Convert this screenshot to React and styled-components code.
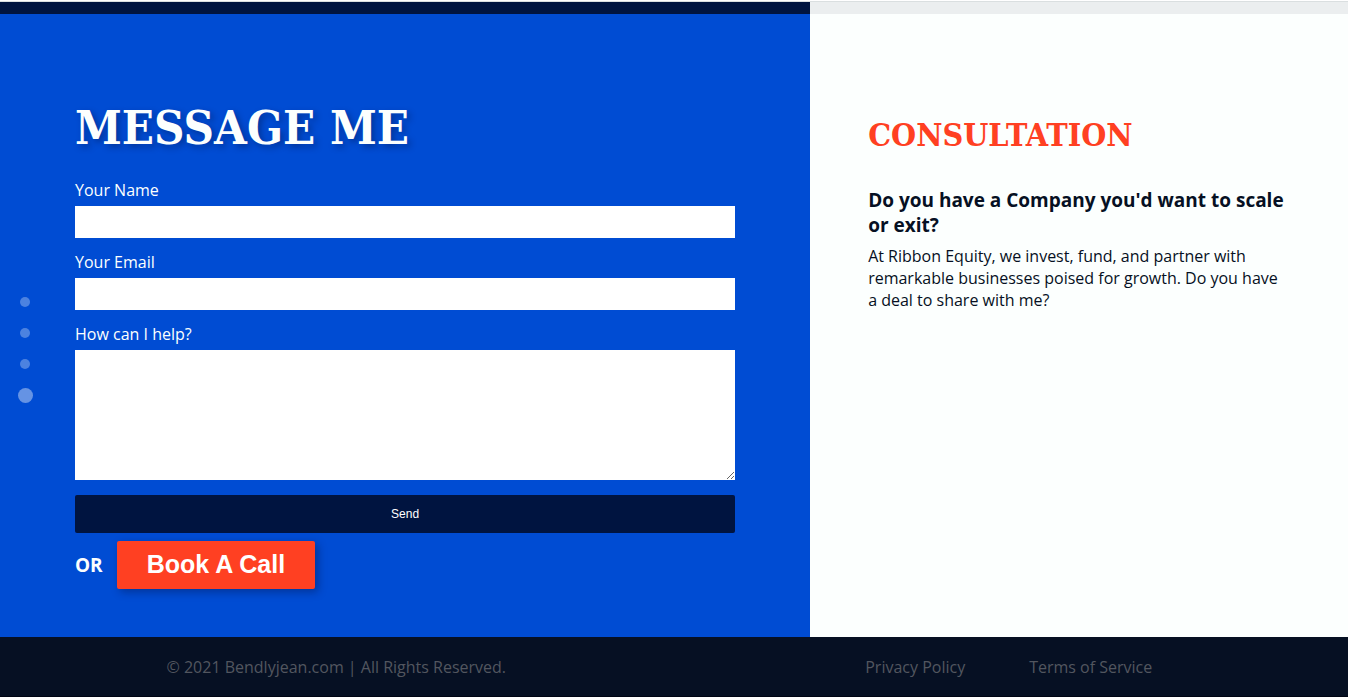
import React from "react";
import styled, { createGlobalStyle } from "styled-components";

const GlobalStyle = createGlobalStyle`
  *, *::before, *::after { box-sizing: border-box; }
  body {
    margin: 0;
    background: #fcfffe;
    color: #041142;
    font-family: "Open Sans", "Noto Sans", sans-serif;
    font-size: 16px;
    line-height: 22px;
  }
  h1, h2, h3, p, ul { margin: 0; padding: 0; }
`;

const Page = styled.div`
  display: flex;
  flex-direction: column;
  min-height: 100vh;
  border-top: 1px solid #fff;
`;

const Columns = styled.div`
  display: grid;
  grid-template-columns: 60.1% 1fr;
`;

const PreviousSections = styled(Columns)`
  height: 13px;
  border-top: 1px solid #dadfe0;
`;

const Strip = styled.div`
  background: ${(p) => p.$color};
`;

const Contact = styled(Columns)`
  flex: 1;
`;

const MessagePanel = styled.section`
  padding: 82px 75px 48px;
  background: #004cd3;
  color: #fcfffe;
`;

const ConsultationPanel = styled.section`
  padding: 97px 58px 48px;
  background: #fcfffe;
`;

const Title = styled.h1`
  font: 700 47px/64px "DejaVu Serif Condensed", "DejaVu Serif", serif;
  text-shadow: 3px 3px 6px rgba(4, 17, 66, 0.4);
  margin-bottom: 16px;
`;

const Subtitle = styled.h2`
  font: 700 32px/48px "DejaVu Serif Condensed", "DejaVu Serif", serif;
  color: #ff4022;
  margin-bottom: 29px;
`;

const Question = styled.h3`
  font-size: 19px;
  font-weight: 700;
  line-height: 25px;
  color: #061023;
  margin-bottom: 7px;
`;

const Pitch = styled.p`
  font-weight: 400;
  color: #061023;
`;

const Form = styled.form`
  display: flex;
  flex-direction: column;
`;

const Label = styled.label`
  line-height: 24px;
  padding: 2px 0 4px;
`;

const Input = styled.input`
  height: 32px;
  margin-bottom: 10px;
  padding: 0 8px;
  border: 0;
  background: #fff;
`;

const TextArea = styled.textarea`
  height: 130px;
  margin-bottom: 15px;
  padding: 8px;
  border: 0;
  background: #fff;
  resize: vertical;
`;

const SendButton = styled.button`
  height: 38px;
  border: 0;
  border-radius: 2px;
  background: #001440;
  color: #fff;
  font: 400 12px "Liberation Sans", Arial, sans-serif;
  cursor: pointer;
`;

const CallRow = styled.div`
  display: flex;
  align-items: center;
  gap: 14px;
  margin-top: 8px;
  font-size: 19px;
  font-weight: 700;
`;

const CallButton = styled.button`
  height: 48px;
  padding: 0 30px 2px;
  border: 0;
  border-radius: 2px;
  background: #ff4022;
  color: #fff;
  font: 700 25px "Liberation Sans", Arial, sans-serif;
  box-shadow: 3px 3px 8px rgba(4, 17, 66, 0.4);
  cursor: pointer;
`;

const Footer = styled.footer`
  display: grid;
  grid-template-columns: 1fr 1fr;
  align-items: center;
  justify-items: center;
  height: 60px;
  padding-right: 3px;
  background: #061023;
  border-bottom: 1px solid #000514;
  color: #52565f;
`;

const FooterLinks = styled.nav`
  display: flex;
  gap: 64px;
`;

const FooterLink = styled.a`
  color: inherit;
  text-decoration: none;
`;

const SectionNav = styled.nav`
  position: fixed;
  left: 10px;
  top: 50%;
  transform: translateY(-50%);
`;

const Dot = styled.a`
  display: flex;
  align-items: center;
  justify-content: center;
  width: 30px;
  height: 31px;

  &::before {
    content: "";
    width: ${(p) => (p.$active ? 15 : 10)}px;
    height: ${(p) => (p.$active ? 15 : 10)}px;
    border-radius: 50%;
    background: rgba(252, 255, 254, ${(p) => (p.$active ? 0.4 : 0.3)});
  }
`;

const sections = ["home", "about", "work", "contact"];

export default function App() {
  return (
    <>
      <GlobalStyle />
      <Page>
        <PreviousSections>
          <Strip $color="#001440" />
          <Strip $color="#ebeeef" />
        </PreviousSections>
        <Contact as="main" id="contact">
          <MessagePanel>
            <Title>MESSAGE ME</Title>
            <Form onSubmit={(e) => e.preventDefault()}>
              <Label htmlFor="name">Your Name</Label>
              <Input id="name" type="text" />
              <Label htmlFor="email">Your Email</Label>
              <Input id="email" type="email" />
              <Label htmlFor="help">How can I help?</Label>
              <TextArea id="help" />
              <SendButton type="submit">Send</SendButton>
            </Form>
            <CallRow>
              <span>OR</span>
              <CallButton type="button">Book A Call</CallButton>
            </CallRow>
          </MessagePanel>
          <ConsultationPanel>
            <Subtitle>CONSULTATION</Subtitle>
            <Question>Do you have a Company you'd want to scale or exit?</Question>
            <Pitch>
              At Ribbon Equity, we invest, fund, and partner with remarkable
              businesses poised for growth. Do you have a deal to share with me?
            </Pitch>
          </ConsultationPanel>
        </Contact>
        <Footer>
          <span>© 2021 Bendlyjean.com | All Rights Reserved.</span>
          <FooterLinks>
            <FooterLink href="#privacy">Privacy Policy</FooterLink>
            <FooterLink href="#terms">Terms of Service</FooterLink>
          </FooterLinks>
        </Footer>
      </Page>
      <SectionNav aria-label="Sections">
        {sections.map((name) => (
          <Dot
            key={name}
            href={`#${name}`}
            aria-label={name}
            $active={name === "contact"}
          />
        ))}
      </SectionNav>
    </>
  );
}
